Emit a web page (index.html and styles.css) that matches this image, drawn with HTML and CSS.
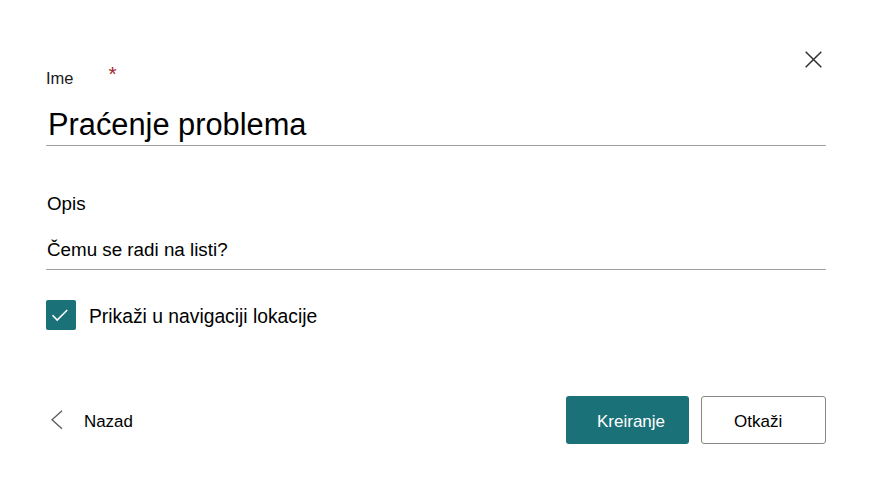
FILE: index.html
```html
<!DOCTYPE html>
<html lang="hr">
<head>
<meta charset="utf-8">
<title>Kreiraj popis</title>
<link rel="stylesheet" href="styles.css">
</head>
<body>
<main class="dialog">
  <div class="head">
    <label class="lbl name-lbl">Ime<span class="req">*</span></label>
    <button class="close" aria-label="Zatvori">
      <svg width="17" height="17" viewBox="0 0 17 17"><path d="M0.7 0.7 L16.3 16.3 M16.3 0.7 L0.7 16.3" stroke="#323130" stroke-width="1.5" fill="none"/></svg>
    </button>
  </div>
  <div class="field title">Praćenje problema</div>
  <label class="lbl opis">Opis</label>
  <div class="field desc">Čemu se radi na listi?</div>
  <label class="check">
    <span class="box"><svg width="30" height="30" viewBox="0 0 30 30"><path d="M6.5 15.2 L11.2 20 L21.2 10" stroke="#fff" stroke-width="1.6" fill="none"/></svg></span>
    <span class="check-text">Prikaži u navigaciji lokacije</span>
  </label>
  <div class="footer">
    <button class="back">
      <svg width="12" height="20" viewBox="0 0 12 20"><path d="M11 0.8 L1 9.8 L11 18.8" stroke="#605e5c" stroke-width="1.4" fill="none"/></svg>
      <span>Nazad</span>
    </button>
    <div class="actions">
      <button class="btn primary">Kreiranje</button>
      <button class="btn secondary">Otkaži</button>
    </div>
  </div>
</main>
</body>
</html>
```
FILE: styles.css
```css
html, body {
  margin: 0;
  background: #ffffff;
}
body {
  font-family: "Liberation Sans", Arial, sans-serif;
  color: #000;
}
.dialog {
  padding: 50px 45px 0 46px;
  display: flex;
  flex-direction: column;
}
.head {
  display: flex;
  align-items: flex-start;
  justify-content: space-between;
}
.lbl {
  display: block;
}
.name-lbl {
  margin-top: 17px;
  font-size: 16.5px;
  line-height: 20px;
  color: #1b1a19;
}
.req {
  color: #a4262c;
  margin-left: 35px;
  font-size: 21px;
  position: relative;
  top: -3px;
}
.close {
  border: 0;
  background: none;
  padding: 0;
  margin: 1px 4px 0 0;
  width: 17px;
  height: 17px;
  display: block;
}
.close svg { display: block; }
.field {
  border-bottom: 1px solid #a19f9d;
}
.title {
  margin-top: 19px;
  font-size: 30.8px;
  line-height: 36px;
  padding: 0 0 2px 2px;
}
.opis {
  margin-top: 47px;
  font-size: 18.8px;
  line-height: 22px;
  padding-left: 1px;
}
.desc {
  margin-top: 24px;
  font-size: 18.8px;
  line-height: 22px;
  padding: 0 0 8px 1px;
}
.check {
  margin-top: 30px;
  display: flex;
  align-items: flex-start;
  gap: 13px;
}
.box {
  width: 30px;
  height: 30px;
  background: #1b7178;
  border-radius: 2px;
  display: block;
}
.box svg { display: block; }
.check-text {
  margin-top: 6px;
  font-size: 19.3px;
  line-height: 22px;
}
.footer {
  margin-top: 66px;
  display: flex;
  align-items: center;
  justify-content: space-between;
}
.back {
  border: 0;
  background: none;
  padding: 0 0 0 5px;
  display: flex;
  align-items: center;
  font-family: inherit;
  font-size: 16.9px;
  line-height: 20px;
  color: #000;
}
.back svg { display: block; }
.back span {
  margin-left: 21px;
  padding-top: 3px;
}
.actions {
  display: flex;
  gap: 12px;
}
.btn {
  height: 48px;
  border-radius: 3px;
  font-family: inherit;
  font-size: 17px;
  line-height: 20px;
  text-align: left;
  padding: 4px 0 0 0;
  box-sizing: border-box;
}
.primary {
  width: 123px;
  padding-left: 31px;
  background: #1b7178;
  border: 0;
  color: #fff;
}
.secondary {
  width: 125px;
  padding-left: 32px;
  background: #fff;
  border: 1px solid #8a8886;
  color: #000;
}
```
